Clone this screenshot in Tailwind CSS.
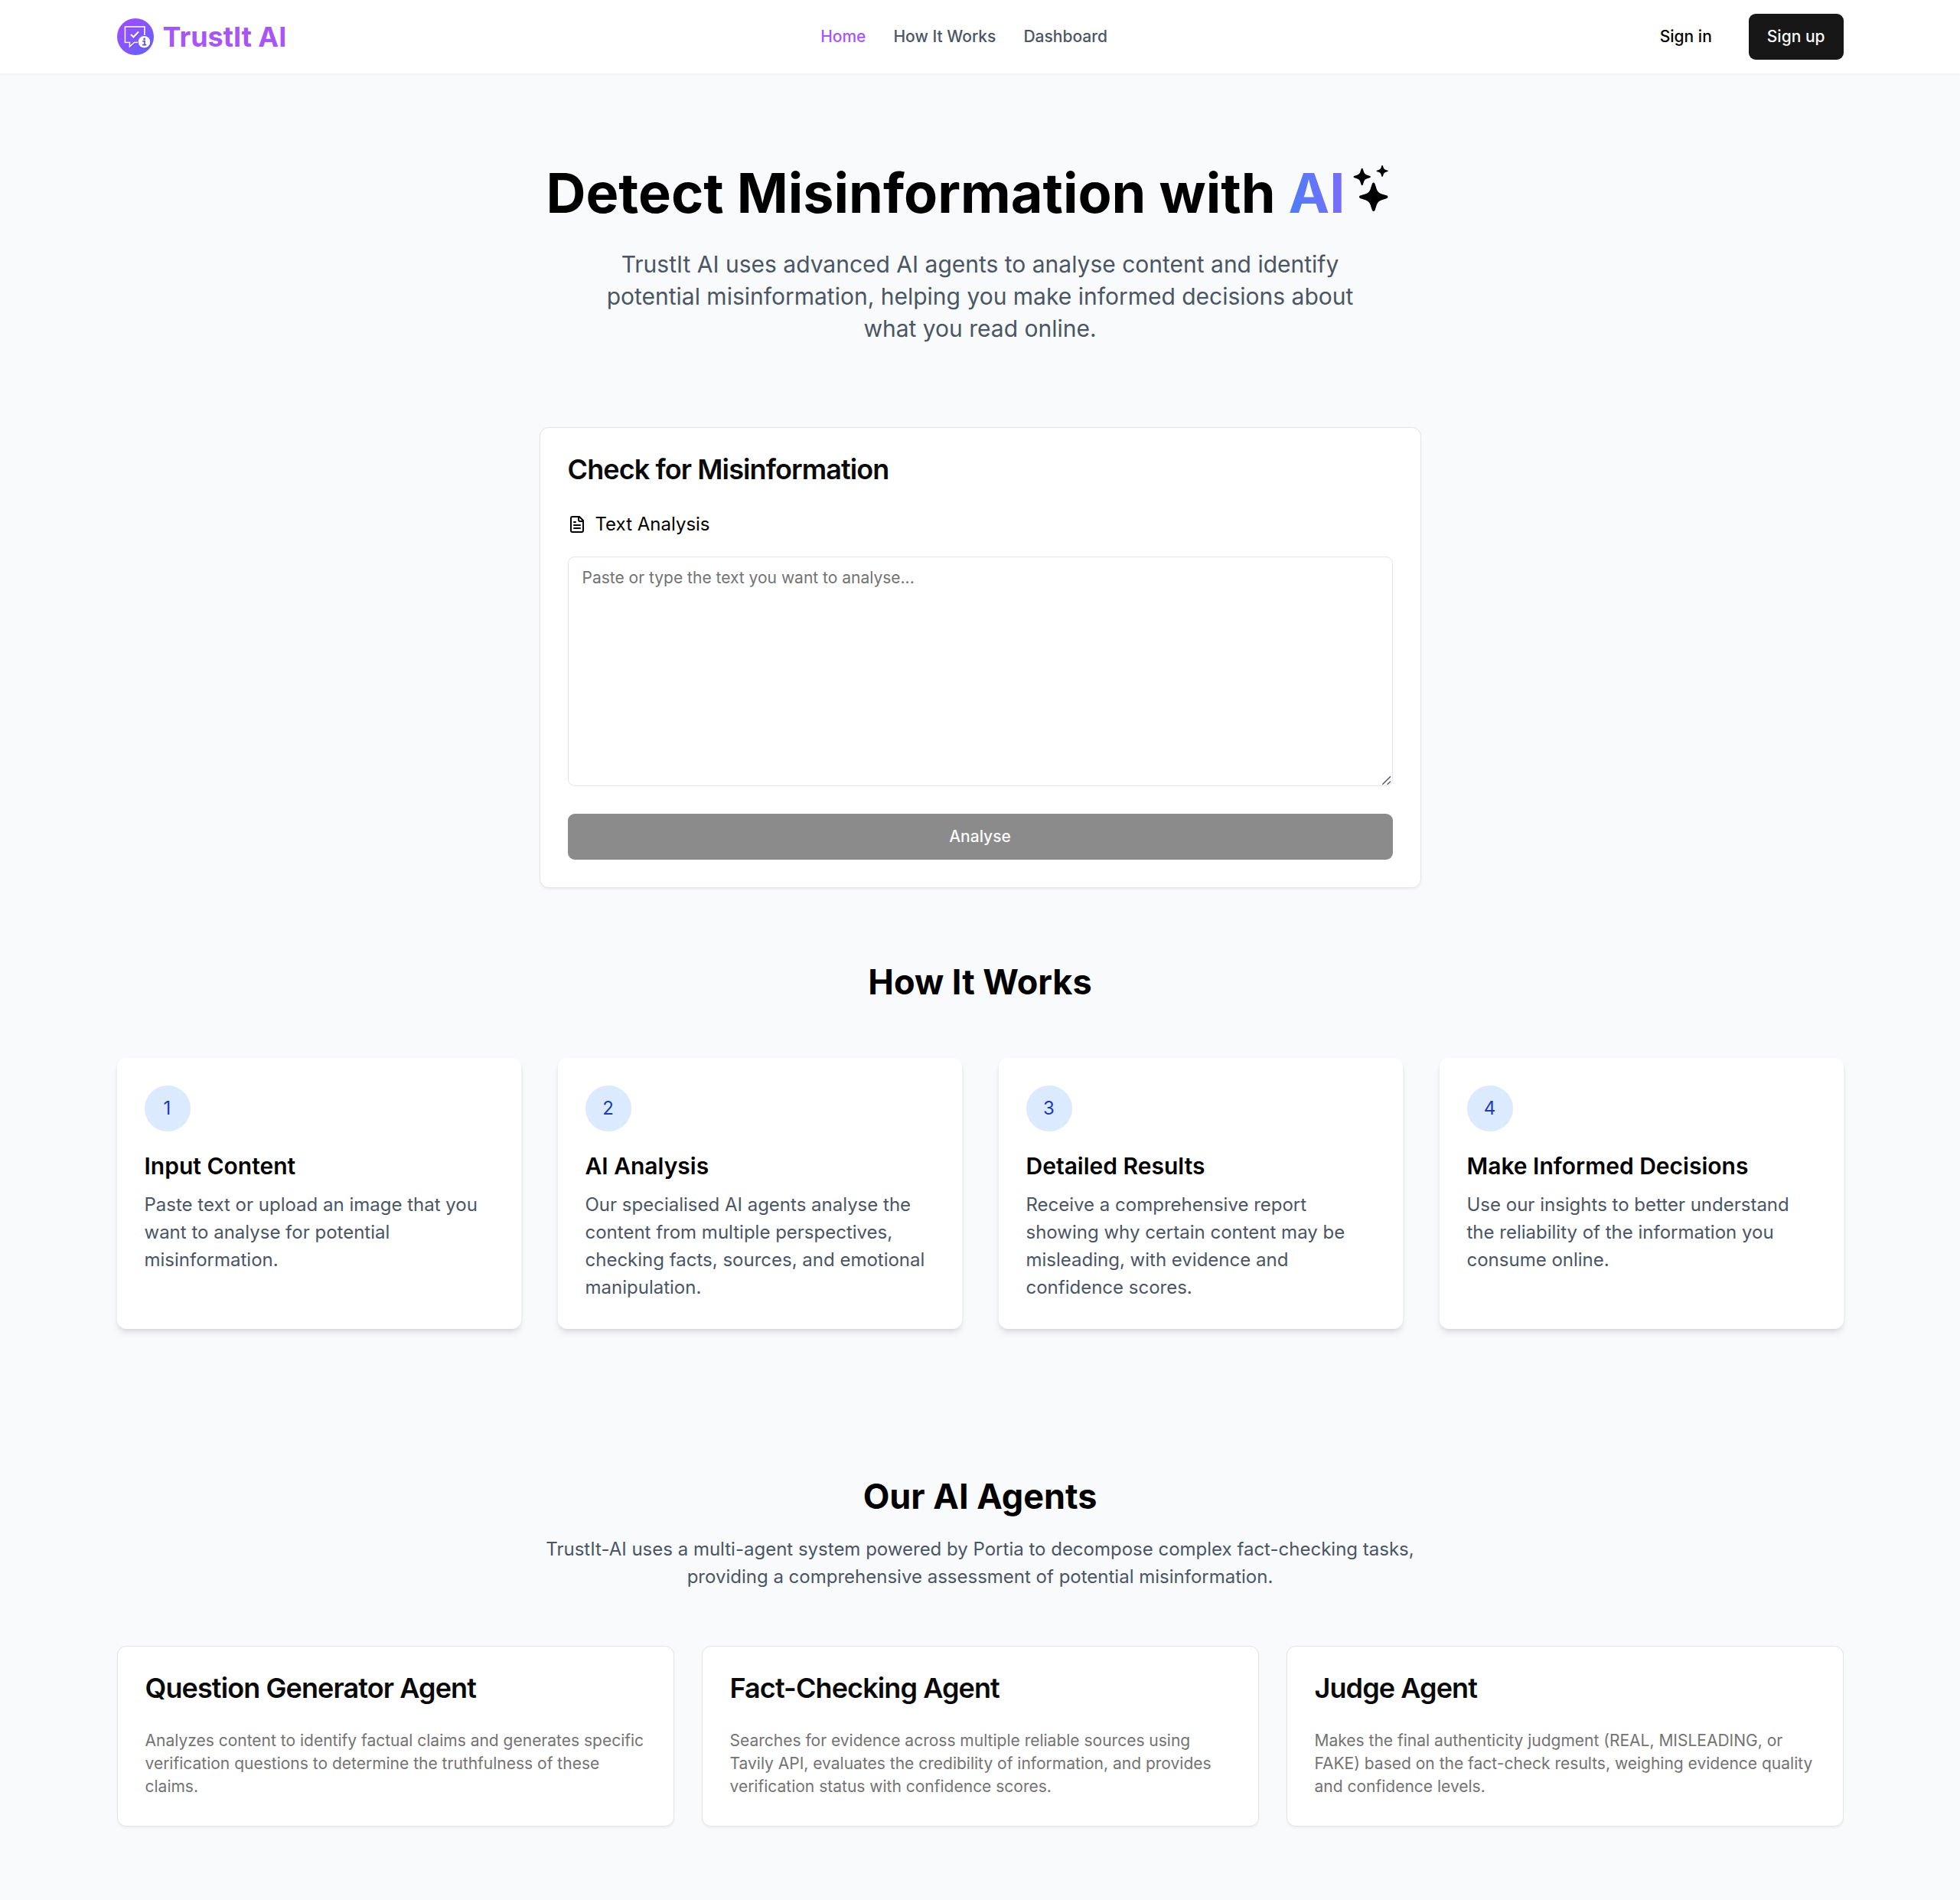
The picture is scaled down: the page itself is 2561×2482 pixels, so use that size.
<!DOCTYPE html>
<html lang="en" class="text-[24px]">
<head>
<meta charset="utf-8">
<title>TrustIt AI</title>
<script src="https://cdn.jsdelivr.net/npm/@tailwindcss/browser@4"></script>
</head>
<body class="min-h-screen bg-gray-50 font-['Inter',sans-serif] text-base text-black">
<header class="relative bg-white shadow-[0_1.5px_3px_0_rgb(0_0_0/0.05)]">
  <div class="mx-auto flex h-16 max-w-[96rem] items-center justify-between px-4">
    <a class="flex items-center gap-2">
      <svg class="size-8" viewBox="0 0 48 48" fill="none">
        <defs><linearGradient id="logo" x1="6" y1="6" x2="42" y2="42" gradientUnits="userSpaceOnUse"><stop stop-color="#9d4dfb"/><stop offset="1" stop-color="#6a60ff"/></linearGradient></defs>
        <circle cx="24" cy="24" r="24" fill="url(#logo)"/>
        <g stroke="#3f2f9c" stroke-opacity="0.45" transform="translate(0.6 0.9)">
          <path d="M27 31.500H22.500L16.500 37V31.500H10.500V11H36V22" stroke-width="1.400"/>
          <path d="M18 21L21.500 24.500L28 17.500" stroke-width="2"/>
          <circle cx="35.500" cy="30.800" r="7.400"/>
        </g>
        <path d="M27 31.500H22.500L16.500 37V31.500H10.500V11H36V22" stroke="#fff" stroke-width="1.600"/>
        <path d="M18 21L21.500 24.500L28 17.500" stroke="#fff" stroke-width="2.200"/>
        <circle cx="35.500" cy="30.800" r="7.800" fill="#fff"/>
        <path d="M33.300 29.800H36V34.500M33 34.700H38.300" stroke="#5f4fd0" stroke-width="1.700"/>
        <circle cx="35.600" cy="27" r="1.400" fill="#5f4fd0"/>
      </svg>
      <span class="text-2xl font-bold text-[#a855f7]">TrustIt AI</span>
    </a>
    <nav class="flex items-center gap-6 text-sm font-medium text-gray-600">
      <a class="text-[#a855f7]">Home</a>
      <a>How It Works</a>
      <a>Dashboard</a>
    </nav>
    <div class="flex items-center gap-4 text-sm font-medium">
      <button class="h-10 px-4">Sign in</button>
      <button class="h-10 rounded-md bg-neutral-900 px-4 text-neutral-50">Sign up</button>
    </div>
  </div>
</header>

<main class="mx-auto max-w-[96rem] px-4">
  <section class="flex flex-col items-center pt-20 text-center">
    <h1 class="mb-6 flex text-5xl font-bold leading-none">
      <span>Detect Misinformation with&nbsp;</span>
      <span class="bg-linear-to-r from-[#4b7df9] to-[#7a6bf8] bg-clip-text text-transparent">AI</span>
      <svg class="h-[72px] w-[90px]" viewBox="0 0 90 72" fill="currentColor">
        <defs><path id="star" d="M-9 -94Q0 -106 9 -94L22 -54Q30 -30 54 -22L94 -9Q106 0 94 9L54 22Q30 30 22 54L9 94Q0 106 -9 94L-22 54Q-30 30 -54 22L-94 9Q-106 0 -94 -9L-54 -22Q-30 -30 -22 -54Z"/></defs>
        <use href="#star" transform="translate(36.700 41.300) scale(0.188)"/>
        <use href="#star" transform="translate(21.700 15) scale(0.112)"/>
        <use href="#star" transform="translate(48.100 7.400) scale(0.076)"/>
      </svg>
    </h1>
    <p class="max-w-2xl text-xl text-gray-600">TrustIt AI uses advanced AI agents to analyse content and identify potential misinformation, helping you make informed decisions about what you read online.</p>
  </section>

  <section class="mx-auto mt-18 max-w-3xl rounded-lg border border-neutral-200 bg-white p-6 text-neutral-950 shadow-[0_1.5px_3px_0_rgb(0_0_0/0.05)]">
    <h2 class="text-2xl leading-none font-semibold tracking-tight">Check for Misinformation</h2>
    <div class="mt-6 flex items-center gap-2 text-black">
      <svg class="size-4" viewBox="0 0 24 24" fill="none" stroke="currentColor" stroke-width="2" stroke-linecap="round" stroke-linejoin="round"><path d="M15 2H6a2 2 0 0 0-2 2v16a2 2 0 0 0 2 2h12a2 2 0 0 0 2-2V7Z"/><path d="M14 2v4a2 2 0 0 0 2 2h4"/><path d="M10 9H8"/><path d="M16 13H8"/><path d="M16 17H8"/></svg>
      <span>Text Analysis</span>
    </div>
    <div class="relative mt-4 h-[300px] rounded-md border border-neutral-200 px-3 py-2 text-sm text-neutral-500">
      Paste or type the text you want to analyse...
      <svg class="absolute right-0 bottom-0 size-[18px]" viewBox="0 0 18 18" stroke="#55565c" stroke-width="1.500"><path d="M5.300 16.700L16 6.300M11.700 16.700L16 12.700"/></svg>
    </div>
    <button class="mt-6 h-10 w-full rounded-md bg-[#8b8b8b] text-sm font-medium text-neutral-50">Analyse</button>
  </section>

  <section class="pt-16">
    <h2 class="mb-12 text-center text-3xl font-bold">How It Works</h2>
    <div class="grid grid-cols-4 gap-8">
      <div class="rounded-lg bg-white p-6 shadow-[0_6px_9px_-1.5px_rgb(0_0_0/0.1),0_3px_6px_-3px_rgb(0_0_0/0.1)]">
        <div class="mb-4 flex size-10 items-center justify-center rounded-full bg-blue-100 text-blue-800">1</div>
        <h3 class="mb-2 text-xl font-semibold">Input Content</h3>
        <p class="text-gray-600">Paste text or upload an image that you want to analyse for potential misinformation.</p>
      </div>
      <div class="rounded-lg bg-white p-6 shadow-[0_6px_9px_-1.5px_rgb(0_0_0/0.1),0_3px_6px_-3px_rgb(0_0_0/0.1)]">
        <div class="mb-4 flex size-10 items-center justify-center rounded-full bg-blue-100 text-blue-800">2</div>
        <h3 class="mb-2 text-xl font-semibold">AI Analysis</h3>
        <p class="text-gray-600">Our specialised AI agents analyse the content from multiple perspectives, checking facts, sources, and emotional manipulation.</p>
      </div>
      <div class="rounded-lg bg-white p-6 shadow-[0_6px_9px_-1.5px_rgb(0_0_0/0.1),0_3px_6px_-3px_rgb(0_0_0/0.1)]">
        <div class="mb-4 flex size-10 items-center justify-center rounded-full bg-blue-100 text-blue-800">3</div>
        <h3 class="mb-2 text-xl font-semibold">Detailed Results</h3>
        <p class="text-gray-600">Receive a comprehensive report showing why certain content may be misleading, with evidence and confidence scores.</p>
      </div>
      <div class="rounded-lg bg-white p-6 shadow-[0_6px_9px_-1.5px_rgb(0_0_0/0.1),0_3px_6px_-3px_rgb(0_0_0/0.1)]">
        <div class="mb-4 flex size-10 items-center justify-center rounded-full bg-blue-100 text-blue-800">4</div>
        <h3 class="mb-2 text-xl font-semibold">Make Informed Decisions</h3>
        <p class="text-gray-600">Use our insights to better understand the reliability of the information you consume online.</p>
      </div>
    </div>
  </section>

  <section class="pt-32 pb-16">
    <h2 class="mb-4 text-center text-3xl font-bold">Our AI Agents</h2>
    <p class="mx-auto mb-12 max-w-3xl text-center text-gray-600">TrustIt-AI uses a multi-agent system powered by Portia to decompose complex fact-checking tasks, providing a comprehensive assessment of potential misinformation.</p>
    <div class="grid grid-cols-3 gap-6">
      <div class="rounded-lg border border-neutral-200 bg-white p-6 shadow-[0_1.5px_3px_0_rgb(0_0_0/0.05)]">
        <h3 class="mb-6 text-2xl leading-none font-semibold tracking-tight text-neutral-950">Question Generator Agent</h3>
        <p class="text-sm text-neutral-500">Analyzes content to identify factual claims and generates specific verification questions to determine the truthfulness of these claims.</p>
      </div>
      <div class="rounded-lg border border-neutral-200 bg-white p-6 shadow-[0_1.5px_3px_0_rgb(0_0_0/0.05)]">
        <h3 class="mb-6 text-2xl leading-none font-semibold tracking-tight text-neutral-950">Fact-Checking Agent</h3>
        <p class="text-sm text-neutral-500">Searches for evidence across multiple reliable sources using Tavily API, evaluates the credibility of information, and provides verification status with confidence scores.</p>
      </div>
      <div class="rounded-lg border border-neutral-200 bg-white p-6 shadow-[0_1.5px_3px_0_rgb(0_0_0/0.05)]">
        <h3 class="mb-6 text-2xl leading-none font-semibold tracking-tight text-neutral-950">Judge Agent</h3>
        <p class="text-sm text-neutral-500">Makes the final authenticity judgment (REAL, MISLEADING, or FAKE) based on the fact-check results, weighing evidence quality and confidence levels.</p>
      </div>
    </div>
  </section>
</main>
</body>
</html>
